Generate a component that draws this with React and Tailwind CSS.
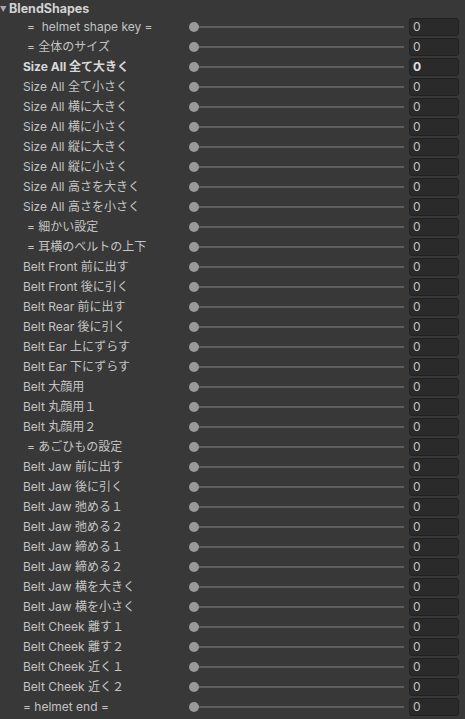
import React from "react";

const rows = [
  ["=  helmet shape key =", false, true],
  ["= 全体のサイズ", false, true],
  ["Size All 全て大きく", true, false],
  ["Size All 全て小さく"],
  ["Size All 横に大きく"],
  ["Size All 横に小さく"],
  ["Size All 縦に大きく"],
  ["Size All 縦に小さく"],
  ["Size All 高さを大きく"],
  ["Size All 高さを小さく"],
  ["= 細かい設定", false, true],
  ["= 耳横のベルトの上下", false, true],
  ["Belt Front 前に出す"],
  ["Belt Front 後に引く"],
  ["Belt Rear 前に出す"],
  ["Belt Rear 後に引く"],
  ["Belt Ear 上にずらす"],
  ["Belt Ear 下にずらす"],
  ["Belt 大顔用"],
  ["Belt 丸顔用１"],
  ["Belt 丸顔用２"],
  ["= あごひもの設定", false, true],
  ["Belt Jaw 前に出す"],
  ["Belt Jaw 後に引く"],
  ["Belt Jaw 弛める１"],
  ["Belt Jaw 弛める２"],
  ["Belt Jaw 締める１"],
  ["Belt Jaw 締める２"],
  ["Belt Jaw 横を大きく"],
  ["Belt Jaw 横を小さく"],
  ["Belt Cheek 離す１"],
  ["Belt Cheek 離す２"],
  ["Belt Cheek 近く１"],
  ["Belt Cheek 近く２"],
  ["= helmet end =", false, false],
];

export default function App() {
  return (
    <div
      className="w-[465px] h-[719px] bg-[#383838] text-[#c4c4c4] overflow-hidden"
      style={{ fontFamily: 'Inter, "Noto Sans CJK JP", sans-serif' }}
    >
      <div className="h-[18px] flex items-center">
        <svg width="8" height="8" viewBox="0 0 8 8" className="shrink-0 mt-[0px]">
          <polygon points="0,1 6.5,1 3.25,7" fill="#a8a8a8" />
        </svg>
        <span className="ml-[1px] text-[12.5px] font-bold text-[#d2d2d2] leading-none">BlendShapes</span>
      </div>
      <div className="flex flex-col gap-[2px]">
        {rows.map(([label, bold, indent], i) => (
          <div key={i} className="h-[18px] flex items-center">
            <div
              className={
                "w-[188px] shrink-0 text-[12px] leading-none whitespace-pre " +
                (indent ? "pl-[27px] " : "pl-[23px] ") +
                (bold ? "font-bold text-[#d8d8d8]" : "")
              }
            >
              {label}
            </div>
            <div className="relative w-[216px] h-[18px] flex items-center">
              <div className="absolute left-[5px] right-0 h-[2px] bg-[#5e5e5e]" />
              <div className="absolute left-[1px] w-[10px] h-[10px] rounded-full bg-[#999999]" />
            </div>
            <div
              className={
                "ml-[5px] w-[50px] h-[18px] rounded-[3px] bg-[#2a2a2a] border border-[#212121] flex items-center pl-[3px] text-[12px] " +
                (bold ? "font-bold text-[#e0e0e0]" : "")
              }
            >
              0
            </div>
          </div>
        ))}
      </div>
    </div>
  );
}
